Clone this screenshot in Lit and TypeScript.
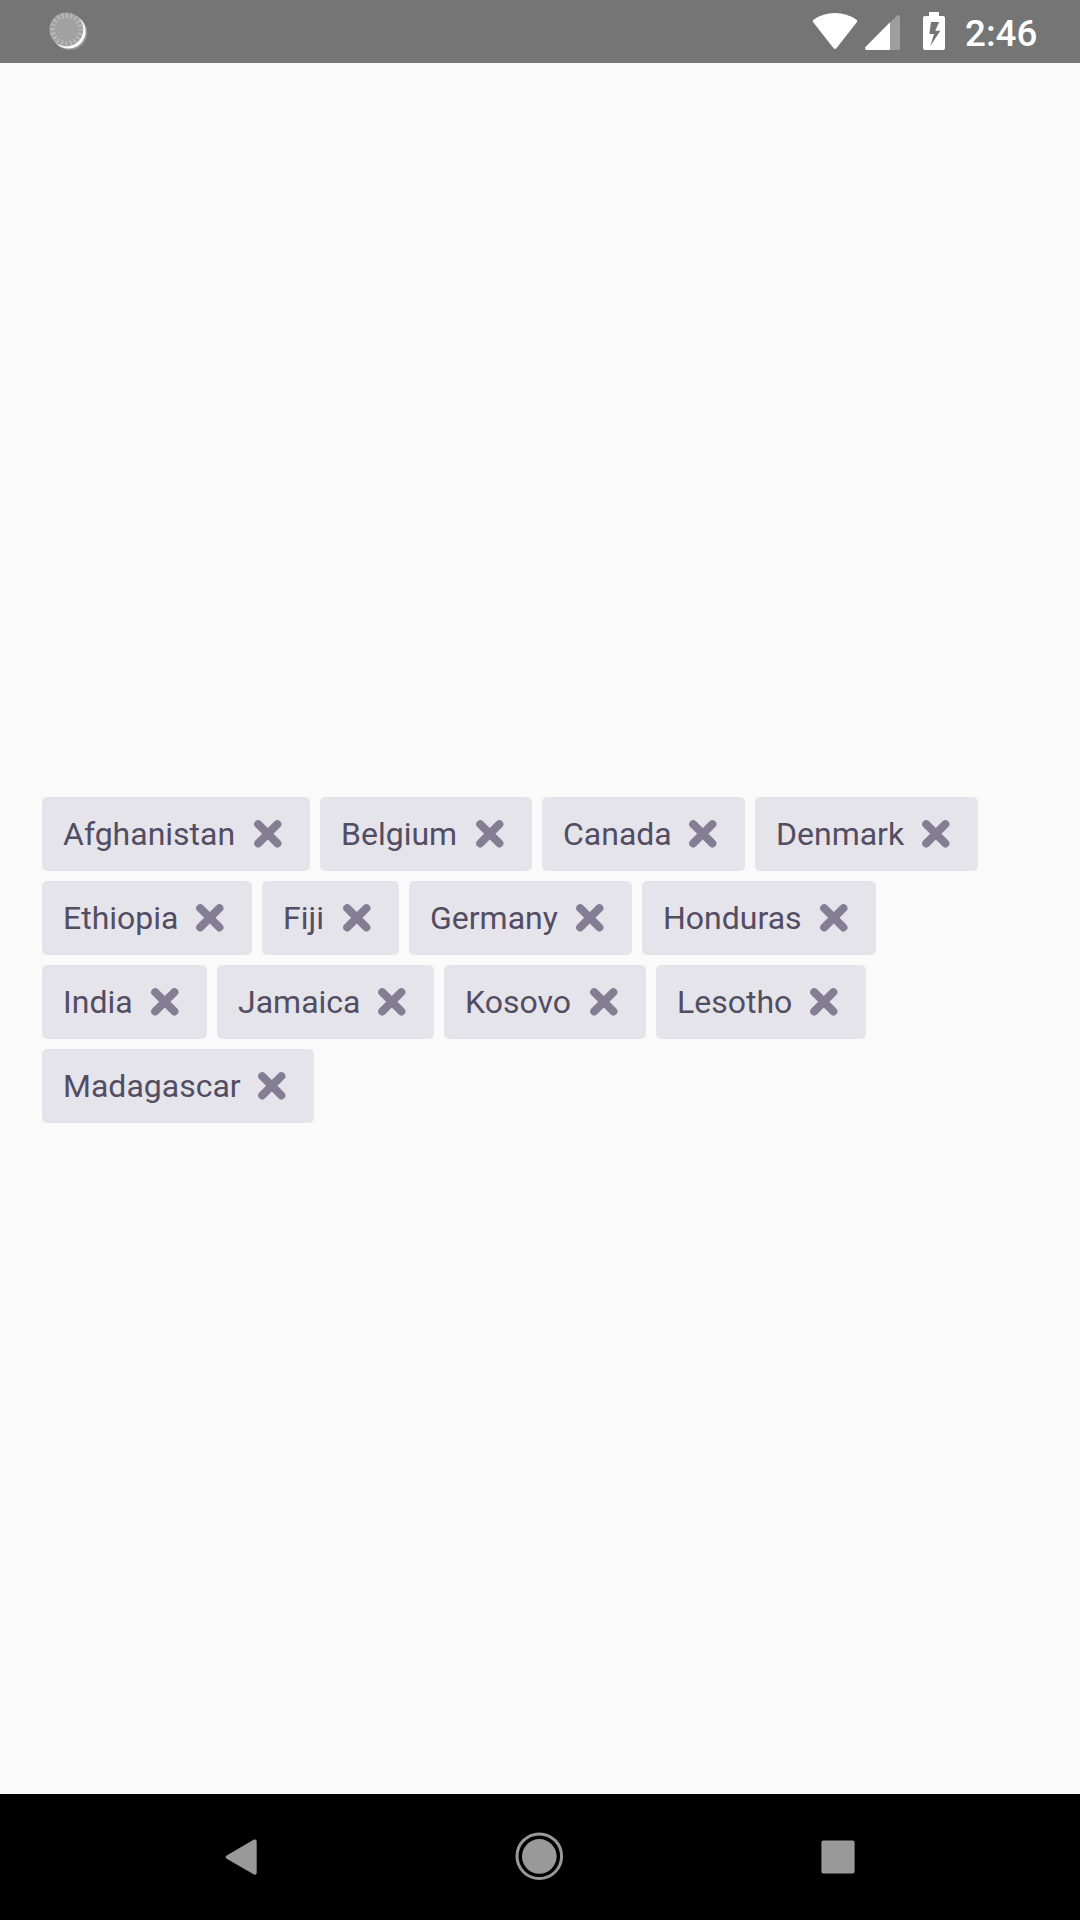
import { LitElement, html, css } from "lit";
import { customElement, property } from "lit/decorators.js";

@customElement("status-bar")
class StatusBar extends LitElement {
  static styles = css`
    :host { display: block; }
    .bar {
      height: 63px;
      box-sizing: border-box;
      padding: 0 42px 0 46px;
      display: flex;
      align-items: flex-start;
      background: #757575;
    }
    .spacer { flex: 1; }
    svg { display: block; flex: none; }
    .time {
      width: 73px;
      margin-left: 17px;
      padding-top: 12px;
      font: 500 36.75px/43px Roboto, sans-serif;
      color: #fff;
    }
  `;

  render() {
    return html`
      <div class="bar">
        <svg width="44" height="63" viewBox="46 0 44 63">
          <circle cx="69.8" cy="32.6" r="17.4" fill="#989898" />
          <circle cx="68.4" cy="31.4" r="17.2" fill="#fff" />
          <circle cx="66.3" cy="29.4" r="17" fill="#a1a1a1" />
          <circle cx="66.6" cy="29.4" r="14" fill="none" stroke="#bababa" stroke-width="5"
            stroke-dasharray="1.8 2.598" stroke-dashoffset="0.9" />
          <circle cx="66.6" cy="29.4" r="11" fill="#a1a1a1" />
        </svg>
        <div class="spacer"></div>
        <svg width="138" height="63" viewBox="810 0 138 63">
          <path d="M812.8 21.8Q812.4 20.6 813.5 19.7Q823 13 835 13T856.5 19.7Q857.6 20.6 857.2 21.8L836.6 48Q835 50 833.4 48Z" fill="#fff" />
          <path d="M890 22.5L897.2 15.4Q899.8 14 900 16.5V48.5Q900 50 898.5 50H890Z" fill="#9e9e9e" />
          <path d="M890 22.3V50H866.5Q864.6 49.6 865.2 47.2Z" fill="#fff" />
          <path fill-rule="evenodd" fill="#fff"
            d="M929 12H939V16H943Q945 16 945 18V48Q945 50 943 50H925Q923 50 923 48V18Q923 16 925 16H929ZM931 22L929.3 34H934L930.3 46L940.3 30.7H935.2L939.2 22Z" />
        </svg>
        <div class="time">2:46</div>
      </div>
    `;
  }
}

@customElement("country-chip")
class CountryChip extends LitElement {
  @property() label = "";
  @property({ type: Number }) width = 0;

  static styles = css`
    :host { display: block; }
    .chip {
      height: 74px;
      box-sizing: border-box;
      padding: 0 28px 0 21px;
      display: flex;
      align-items: center;
      justify-content: space-between;
      border-radius: 5px;
      background: #e5e4ea;
      color: #534d64;
      font: 400 32px/38px Roboto, sans-serif;
      white-space: nowrap;
    }
    svg { display: block; flex: none; }
  `;

  render() {
    return html`
      <div class="chip" style="width:${this.width}px">
        <span>${this.label}</span>
        <svg width="28" height="28" viewBox="0 0 28 28">
          <path d="M4.2 4.2L23.4 23.4M23.4 4.2L4.2 23.4" stroke="#847d93" stroke-width="8" stroke-linecap="round" />
        </svg>
      </div>
    `;
  }
}

@customElement("nav-bar")
class NavBar extends LitElement {
  static styles = css`
    :host { display: block; }
    .bar {
      height: 126px;
      box-sizing: border-box;
      padding: 0 210px;
      display: flex;
      align-items: center;
      justify-content: space-between;
      background: #000;
    }
    svg { display: block; }
  `;

  render() {
    return html`
      <div class="bar">
        <svg width="64" height="64" viewBox="210 1825 64 64">
          <path d="M254 1839.6Q256.7 1838.8 256.7 1841.6V1872.6Q256.7 1875.4 254 1874.6L226.7 1858.8Q224.6 1857.1 226.7 1855.4Z" fill="#999" />
        </svg>
        <svg width="64" height="64" viewBox="508 1825 64 64">
          <circle cx="539.3" cy="1856.2" r="22.3" fill="none" stroke="#999" stroke-width="3" />
          <circle cx="539.3" cy="1856.4" r="17.3" fill="#999" />
        </svg>
        <svg width="64" height="64" viewBox="806 1825 64 64">
          <rect x="821.4" y="1840.4" width="33.2" height="33.2" rx="2" fill="#999" />
        </svg>
      </div>
    `;
  }
}

type Chip = [name: string, width: number];

@customElement("app-root")
class AppRoot extends LitElement {
  static styles = css`
    :host { display: block; }
    .screen {
      height: 1920px;
      display: flex;
      flex-direction: column;
      background: #fafafa;
      overflow: hidden;
    }
    .content {
      flex: 1;
      padding: 734px 42px 0;
      display: flex;
      flex-direction: column;
      gap: 10px;
    }
    .row { display: flex; gap: 10px; }
  `;

  private rows: Chip[][] = [
    [["Afghanistan", 268], ["Belgium", 212], ["Canada", 203], ["Denmark", 223]],
    [["Ethiopia", 210], ["Fiji", 137], ["Germany", 223], ["Honduras", 234]],
    [["India", 165], ["Jamaica", 217], ["Kosovo", 202], ["Lesotho", 210]],
    [["Madagascar", 272]],
  ];

  render() {
    return html`
      <div class="screen">
        <status-bar></status-bar>
        <div class="content">
          ${this.rows.map(
            (row) => html`<div class="row">
              ${row.map(
                ([name, width]) => html`<country-chip .label=${name} .width=${width}></country-chip>`
              )}
            </div>`
          )}
        </div>
        <nav-bar></nav-bar>
      </div>
    `;
  }
}
